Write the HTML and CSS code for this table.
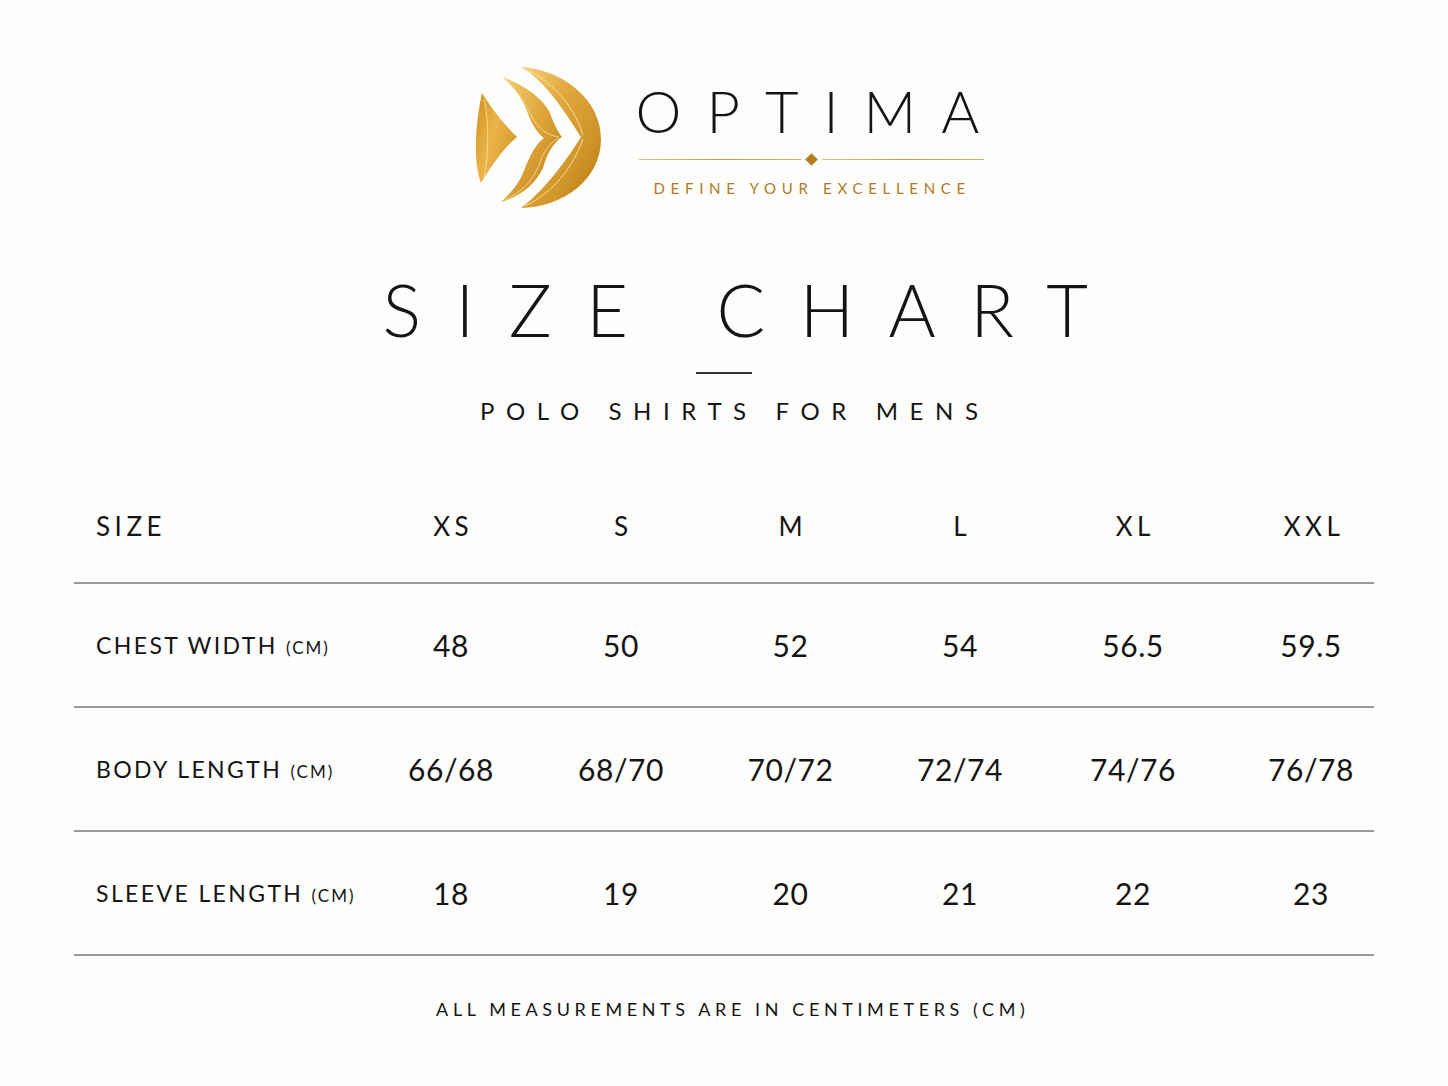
FILE: index.html
```html
<!DOCTYPE html>
<html lang="en">
<head>
<meta charset="utf-8">
<title>Optima Size Chart</title>
<link rel="stylesheet" href="styles.css">
</head>
<body>
<main class="page">
  <header class="brand">
    <svg class="logo" width="150" height="165" viewBox="0 0 150 165" aria-hidden="true">
      <defs>
        <linearGradient id="g1" x1="0" y1="0" x2="1" y2="1">
          <stop offset="0" stop-color="#f5d27c"/>
          <stop offset="0.35" stop-color="#e2a93f"/>
          <stop offset="0.7" stop-color="#cf9427"/>
          <stop offset="1" stop-color="#b07414"/>
        </linearGradient>
        <linearGradient id="g2" x1="0" y1="0" x2="1" y2="1">
          <stop offset="0" stop-color="#f4cf70"/>
          <stop offset="0.5" stop-color="#dea438"/>
          <stop offset="1" stop-color="#b97d18"/>
        </linearGradient>
        <linearGradient id="g3" x1="0" y1="0" x2="1" y2="0.6">
          <stop offset="0" stop-color="#cf921f"/>
          <stop offset="0.5" stop-color="#ebb44a"/>
          <stop offset="1" stop-color="#d49b2b"/>
        </linearGradient>
      </defs>
      <path d="M52,12 C90,14 132,42 132,84 C132,124 95,152 52,153 C70,140 95,110 112,82 C95,55 75,25 52,12 Z" fill="url(#g1)"/>
      <path d="M55,14 C80,24 104,48 114,80" fill="none" stroke="#fbe6aa" stroke-width="1" opacity="0.85"/>
      <path d="M114,84 C104,112 84,138 56,151" fill="none" stroke="#fbe6aa" stroke-width="1" opacity="0.85"/>
      <path d="M33,22 C55,30 72,42 80,56 C85,68 88,76 93,82 C82,90 78,100 74,113 C66,130 50,142 32,147 C45,135 52,125 56,113 C62,98 68,88 75,83 C68,78 62,68 58,56 C52,42 44,30 33,22 Z" fill="url(#g2)"/>
      <path d="M36,25 C48,35 56,48 62,60 C68,72 76,80 90,82" fill="none" stroke="#fbe6aa" stroke-width="0.9" opacity="0.85"/>
      <path d="M90,83 C80,88 74,98 70,110 C64,126 52,138 36,145" fill="none" stroke="#fbe6aa" stroke-width="0.9" opacity="0.85"/>
      <path d="M13,38 C22,52 32,66 48,82 C36,92 24,108 12,128 C5,110 5,75 13,38 Z" fill="url(#g3)"/>
      <path d="M15,44 C20,62 20,100 15,122" fill="none" stroke="#fbe6aa" stroke-width="0.9" opacity="0.85"/>
    </svg>
    <div class="brand-text">
      <div class="wordmark">OPTIMA</div>
      <div class="rule">
        <span class="rule-line"></span>
        <span class="diamond"></span>
        <span class="rule-line"></span>
      </div>
      <div class="tagline">DEFINE YOUR EXCELLENCE</div>
    </div>
  </header>

  <h1 class="title">SIZE CHART</h1>
  <div class="divider"></div>
  <p class="subtitle">POLO SHIRTS FOR MENS</p>

  <section class="chart">
    <div class="row head">
      <div class="label">SIZE</div>
      <div class="cell">XS</div>
      <div class="cell">S</div>
      <div class="cell">M</div>
      <div class="cell">L</div>
      <div class="cell">XL</div>
      <div class="cell last">XXL</div>
    </div>
    <div class="row">
      <div class="label">CHEST WIDTH <span class="unit">(CM)</span></div>
      <div class="cell num">48</div>
      <div class="cell num">50</div>
      <div class="cell num">52</div>
      <div class="cell num">54</div>
      <div class="cell num">56.5</div>
      <div class="cell num last">59.5</div>
    </div>
    <div class="row">
      <div class="label">BODY LENGTH <span class="unit">(CM)</span></div>
      <div class="cell num">66/68</div>
      <div class="cell num">68/70</div>
      <div class="cell num">70/72</div>
      <div class="cell num">72/74</div>
      <div class="cell num">74/76</div>
      <div class="cell num last">76/78</div>
    </div>
    <div class="row">
      <div class="label">SLEEVE LENGTH <span class="unit">(CM)</span></div>
      <div class="cell num">18</div>
      <div class="cell num">19</div>
      <div class="cell num">20</div>
      <div class="cell num">21</div>
      <div class="cell num">22</div>
      <div class="cell num last">23</div>
    </div>
  </section>

  <p class="note">ALL MEASUREMENTS ARE IN CENTIMETERS (CM)</p>
</main>
</body>
</html>
```

FILE: styles.css
```css
html, body {
  margin: 0;
  padding: 0;
  background: #fdfdfc;
}

.page {
  width: 1448px;
  height: 1086px;
  overflow: hidden;
  font-family: Lato, "Liberation Sans", sans-serif;
  color: #141414;
  display: flex;
  flex-direction: column;
  align-items: center;
  padding-top: 55px;
  box-sizing: border-box;
}

.brand {
  display: flex;
  align-items: flex-start;
  gap: 17px;
  padding-left: 4px;
}

.logo {
  display: block;
  flex: none;
}

.brand-text {
  width: 348px;
  padding-top: 27px;
}

.wordmark {
  font-size: 58px;
  line-height: 1;
  font-weight: 300;
  letter-spacing: 25px;
  height: 58px;
  white-space: nowrap;
}

.rule {
  margin-top: 17px;
  margin-left: 3px;
  display: flex;
  align-items: center;
  height: 4px;
  gap: 6px;
}

.rule-line {
  flex: 1;
  height: 1px;
  background: linear-gradient(90deg, #e2c27e, #c99a3f 50%, #d6b066);
}

.diamond {
  width: 9px;
  height: 9px;
  background: #b77d22;
  transform: rotate(45deg);
  flex: none;
}

.tagline {
  margin-top: 20px;
  padding-left: 18px;
  font-size: 15px;
  line-height: 1;
  letter-spacing: 5.7px;
  color: #b07b25;
  white-space: nowrap;
}

.title {
  margin: 53px 0 0;
  font-size: 72px;
  line-height: 1;
  font-weight: 300;
  letter-spacing: 34.5px;
  padding-left: 57px;
  white-space: nowrap;
}

.divider {
  margin-top: 27px;
  width: 56px;
  height: 2px;
  background: #333;
}

.subtitle {
  margin: 25px 0 0;
  font-size: 24px;
  line-height: 1;
  letter-spacing: 11.6px;
  padding-left: 21.6px;
  white-space: nowrap;
}

.chart {
  margin-top: 47px;
  width: 1300px;
}

.row {
  display: grid;
  grid-template-columns: 292px 170px 170px 169px 170px 176px 1fr;
  align-items: center;
  height: 124px;
  border-bottom: 2px solid #9a9a9a;
  box-sizing: border-box;
}

.row.head {
  height: 114px;
}

.label {
  padding-left: 22px;
  font-size: 23px;
  letter-spacing: 2.4px;
  white-space: nowrap;
}

.head .label,
.head .cell {
  font-size: 26px;
  letter-spacing: 4.5px;
}

.unit {
  font-size: 17px;
  letter-spacing: 2px;
}

.cell {
  text-align: center;
  white-space: nowrap;
}

.head .cell {
  padding-left: 4.5px;
}

.num {
  font-size: 30px;
  letter-spacing: 0.6px;
}

.cell.last {
  padding-left: 27px;
}

.head .cell.last {
  padding-left: 33px;
}

.note {
  margin: 44px 0 0;
  font-size: 18px;
  line-height: 1;
  letter-spacing: 4.6px;
  padding-left: 17.6px;
  white-space: nowrap;
}
```
